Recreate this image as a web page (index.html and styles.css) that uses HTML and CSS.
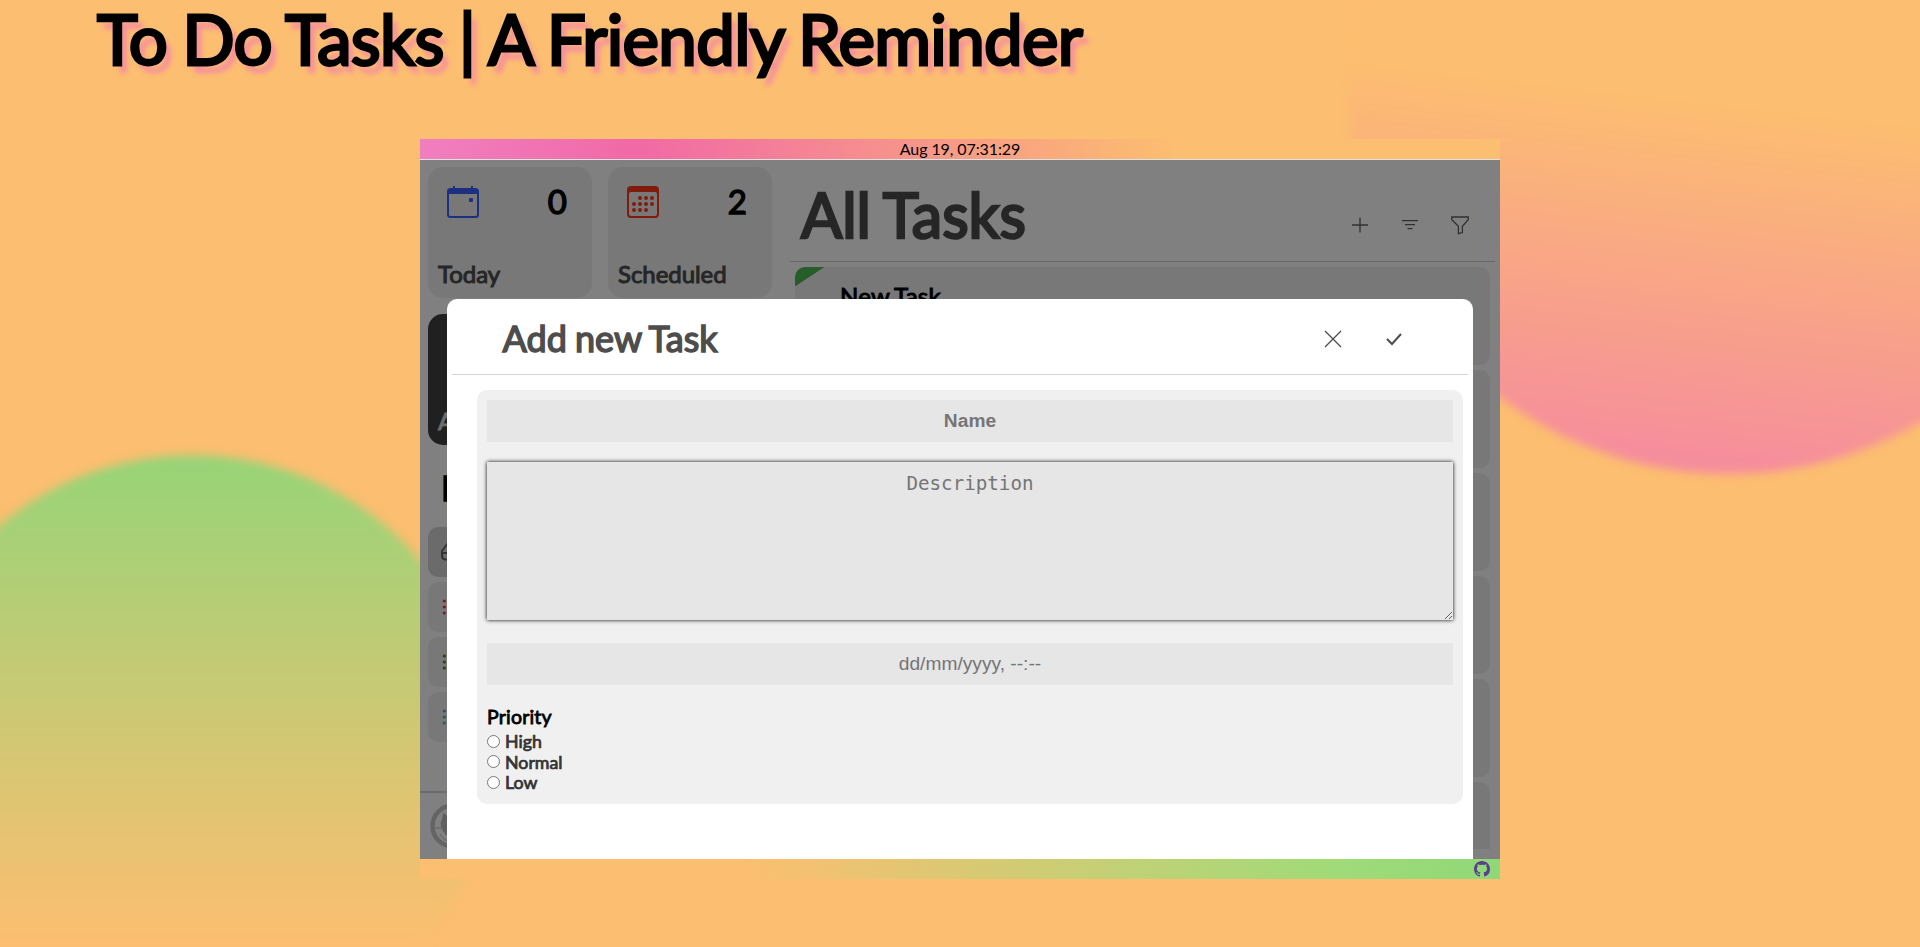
FILE: index.html
```html
<!DOCTYPE html>
<html lang="en">
<head>
<meta charset="utf-8">
<title>To Do Tasks</title>
<link rel="stylesheet" href="styles.css">
</head>
<body>
<div class="backdrop">
  <div class="blob blob-pink"></div>
  <div class="blob blob-green"></div>
</div>
<h1 class="title">To Do Tasks | A Friendly Reminder</h1>
<div class="window">
  <header class="topbar">Aug 19, 07:31:29</header>
  <div class="app">
    <aside class="side">
      <div class="tiles">
        <div class="tile">
          <div class="tile-top">
            <svg class="tile-icon blue" viewBox="0 0 32 32"><path fill="currentColor" fill-rule="evenodd" d="M6 0h2v2h16V0h2v2h2.500a3.500 3.500 0 0 1 3.500 3.500v23a3.500 3.500 0 0 1-3.500 3.500h-25A3.500 3.500 0 0 1 0 28.500v-23A3.500 3.500 0 0 1 3.500 2H6zM2 8v20.500Q2 30 3.500 30h25q1.500 0 1.500-1.500V8zM22 13q0-1 1-1h2q1 0 1 1v2q0 1-1 1h-2q-1 0-1-1z"/></svg>
            <span class="count">0</span>
          </div>
          <span class="tile-name">Today</span>
        </div>
        <div class="tile">
          <div class="tile-top">
            <svg class="tile-icon red" viewBox="0 0 32 32"><path fill="currentColor" fill-rule="evenodd" d="M4 0h24a4 4 0 0 1 4 4v24a4 4 0 0 1-4 4H4a4 4 0 0 1-4-4V4a4 4 0 0 1 4-4zM4 6Q2 6 2 8v20q0 2 2 2h24q2 0 2-2V8q0-2-2-2z"/><g fill="currentColor"><circle cx="13" cy="12" r="2"/><circle cx="19" cy="12" r="2"/><circle cx="25" cy="12" r="2"/><circle cx="7" cy="18" r="2"/><circle cx="13" cy="18" r="2"/><circle cx="19" cy="18" r="2"/><circle cx="25" cy="18" r="2"/><circle cx="7" cy="24" r="2"/><circle cx="13" cy="24" r="2"/><circle cx="19" cy="24" r="2"/></g></svg>
            <span class="count">2</span>
          </div>
          <span class="tile-name">Scheduled</span>
        </div>
        <div class="tile tile-dark"><span class="tile-name">All</span></div>
      </div>
      <h2 class="lists-title">Lists</h2>
      <div class="lists">
        <div class="list active"><svg class="list-icon" viewBox="0 0 30 30"><path fill="none" stroke="currentColor" stroke-width="2" d="M12 6 6 14v4.500q0 4 4 4h12v-6.500H6"/></svg></div>
        <div class="list red"><svg class="list-icon" viewBox="0 0 30 30"><g fill="currentColor"><circle cx="8.300" cy="9" r="1.600"/><circle cx="8.300" cy="15" r="1.600"/><circle cx="8.300" cy="21" r="1.600"/></g></svg></div>
        <div class="list green"><svg class="list-icon" viewBox="0 0 30 30"><g fill="currentColor"><circle cx="8.300" cy="9" r="1.600"/><circle cx="8.300" cy="15" r="1.600"/><circle cx="8.300" cy="21" r="1.600"/></g></svg></div>
        <div class="list teal"><svg class="list-icon" viewBox="0 0 30 30"><g fill="currentColor"><circle cx="8.300" cy="9" r="1.600"/><circle cx="8.300" cy="15" r="1.600"/><circle cx="8.300" cy="21" r="1.600"/></g></svg></div>
      </div>
      <div class="profile">
        <svg class="avatar" viewBox="0 0 46 46"><circle cx="23" cy="23" r="20.500" fill="none" stroke="#646464" stroke-width="4.500"/><path fill="#5f5f5f" d="M13 10q3 1 5 4h10v18H16q-8-9-4-16z"/><path fill="none" stroke="#6b6b6b" stroke-width="1.500" d="M4 25h9M10 31q3 6 9 7"/></svg>
      </div>
    </aside>
    <main class="main">
      <div class="main-head">
        <h2 class="main-title">All Tasks</h2>
        <div class="tools">
          <svg class="tool" viewBox="0 0 24 24"><path d="M12 4.500v15M4 12h16"/></svg>
          <svg class="tool" viewBox="0 0 24 24"><path d="M4 7.700h16M7 11.700h10M9.500 15.700h5"/></svg>
          <svg class="tool" viewBox="0 0 24 24"><path d="M3.800 4h16.400v2.700l-5.800 6.500v6.400l-4 1v-7.400L3.800 6.700z"/></svg>
        </div>
      </div>
      <div class="tasks">
        <div class="task done"><span class="task-name">New Task</span></div>
        <div class="task"></div>
        <div class="task"></div>
        <div class="task"></div>
        <div class="task"></div>
        <div class="task"></div>
      </div>
    </main>
    <section class="modal">
      <div class="modal-head">
        <h3 class="modal-title">Add new Task</h3>
        <div class="modal-tools">
          <svg class="mtool" viewBox="0 0 24 24"><path d="m4 4 16 16M20 4 4 20"/></svg>
          <svg class="mtool" viewBox="0 0 24 24"><path stroke-width="2" d="m5 12 5 5 9-10"/></svg>
        </div>
      </div>
      <form class="form">
        <input class="field name" type="text" placeholder="Name">
        <textarea class="desc" placeholder="Description"></textarea>
        <input class="field date" type="text" placeholder="dd/mm/yyyy, --:--">
        <div class="legend">Priority</div>
        <label class="opt"><input class="radio" type="radio" name="priority">High</label>
        <label class="opt"><input class="radio" type="radio" name="priority">Normal</label>
        <label class="opt"><input class="radio" type="radio" name="priority">Low</label>
      </form>
    </section>
  </div>
  <footer class="bottombar">
    <svg class="github" viewBox="0 0 16 16"><path fill="currentColor" d="M8 0C3.580 0 0 3.580 0 8c0 3.540 2.290 6.530 5.470 7.590.4.070.55-.17.55-.38 0-.19-.01-.82-.01-1.490-2.010.37-2.530-.49-2.690-.94-.09-.23-.48-.94-.82-1.130-.28-.15-.68-.52-.01-.53.63-.01 1.080.58 1.230.82.72 1.210 1.870.87 2.330.66.070-.52.28-.87.51-1.070-1.780-.2-3.640-.89-3.640-3.950 0-.87.31-1.590.82-2.150-.08-.2-.36-1.020.08-2.120 0 0 .67-.21 2.200.82.64-.18 1.320-.27 2-.27s1.360.09 2 .27c1.530-1.040 2.200-.82 2.200-.82.44 1.100.16 1.920.08 2.120.51.56.82 1.270.82 2.150 0 3.070-1.870 3.750-3.650 3.950.29.25.54.73.54 1.480 0 1.070-.01 1.930-.01 2.200 0 .21.15.46.55.38A8.010 8.010 0 0 0 16 8c0-4.420-3.580-8-8-8z"/></svg>
  </footer>
</div>
</body>
</html>
```
FILE: styles.css
```css
* { box-sizing: border-box; margin: 0; }
body {
  position: relative;
  height: 947px;
  overflow: hidden;
  background: #fcbe70;
  font-family: Lato, "Liberation Sans", sans-serif;
  color: #000;
}
.title, .main-title, .modal-title, .tile-name, .count, .lists-title, .task-name, .legend, .opt {
  font-weight: 400;
  -webkit-text-stroke: 0.042em currentColor;
}

.backdrop { position: absolute; inset: 0; overflow: hidden; }
.blob { position: absolute; border-radius: 50%; filter: blur(5px); }
.blob-pink {
  left: 1349px; top: -286px; width: 760px; height: 760px;
  background: linear-gradient(186.500deg, #fcbe70 51%, #f58c9d 95%);
}
.blob-green {
  left: -108px; top: 455px; width: 600px; height: 600px;
  background: linear-gradient(180deg, #9ad377 3%, #fcbe70 81%);
}

.title {
  position: relative;
  height: 139px;
  padding-left: 97px;
  font-size: 69px;
  line-height: 83px;
  margin-top: -3px;
  height: 142px;
  letter-spacing: -0.650px;
  word-spacing: -2px;
  text-shadow: 6px 8px 5px #f58d9f;
}
.window { position: relative; width: 1080px; margin: 0 auto; }
.topbar {
  height: 20px;
  text-align: center;
  font-size: 16px;
  letter-spacing: -0.100px;
  line-height: 20px;
  background: linear-gradient(90deg, #f07fc0 0%, #f169a6 20%, #fcbe70 70%);
}
.app {
  position: relative;
  display: flex;
  height: 700px;
  overflow: hidden;
  border-top: 1px solid #e0e0e0;
  background: #808080;
}
.side { display: flex; flex-direction: column; width: 370px; }
.tiles {
  display: grid;
  grid-template-columns: 164px 164px;
  grid-auto-rows: 131px;
  gap: 16px;
  padding: 7px 8px 0;
}
.tile {
  display: flex;
  flex-direction: column;
  justify-content: space-between;
  padding: 19px 25px 8px 10px;
  border-radius: 15px;
  background: #787878;
}
.tile-dark { justify-content: flex-end; background: #202020; }
.tile-top { display: flex; justify-content: space-between; padding-left: 9px; }
.tile-icon { width: 32px; height: 32px; }
.tile-icon.blue { color: #1c2f80; }
.tile-icon.red { color: #801c0c; }
.count { font-size: 33px; line-height: 30px; }
.tile-name { font-size: 24px; line-height: 32px; letter-spacing: -0.050px; color: #262626; }
.tile-dark .tile-name { color: #6c6c6c; }
.lists-title { padding: 20px 0 4px 21px; font-size: 34px; line-height: 45px; height: 69px; }
.lists { display: flex; flex-direction: column; gap: 5px; padding: 13px 8px 0; }
.list { display: flex; align-items: center; height: 50px; padding-left: 8px; border-radius: 10px; background: #787878; }
.list.active { background: #6b6b6b; color: #333; }
.list.red { color: #801c10; }
.list.green { color: #20480c; }
.list.teal { color: #285868; }
.list-icon { width: 30px; height: 30px; }
.profile { margin-top: auto; height: 68px; padding: 10px; border-top: 2px solid #6c6c6c; }
.avatar { display: block; width: 46px; height: 46px; }

.main { width: 710px; padding: 0 5px 0 0; }
.main-head {
  display: flex;
  justify-content: space-between;
  height: 102px;
  padding: 14px 23px 0 11px;
  border-bottom: 1px solid #686868;
}
.main-title { font-size: 61px; line-height: 81px; letter-spacing: 0; word-spacing: -2px; color: #262626; }
.tools { display: flex; gap: 26px; padding-top: 38.500px; }
.tool { width: 24px; height: 24px; fill: none; stroke: #303030; stroke-width: 1.300; }
.tasks { display: flex; flex-direction: column; gap: 5px; height: 587px; overflow: hidden; padding: 5px 5px 0; }
.task { flex: none; height: 98px; padding: 12px 45px; border-radius: 10px; background: #787878; }
.task.done { background: linear-gradient(146.500deg, #265e2b 0 16px, #787878 16.500px); }
.task-name { font-size: 24px; line-height: 33px; letter-spacing: 0.200px; word-spacing: -1px; }

.modal {
  position: absolute;
  left: 27px;
  top: 139px;
  width: 1026px;
  height: 560px;
  padding: 0 5px;
  border-radius: 10px 10px 0 0;
  background: #fff;
}
.modal-head {
  display: flex;
  justify-content: space-between;
  height: 76px;
  padding: 19px 62px 0 50.500px;
  border-bottom: 1px solid #d6d6d6;
}
.modal-title { font-size: 36px; line-height: 41px; letter-spacing: 0; word-spacing: -1px; color: #4d4d4d; }
.modal-tools { display: flex; gap: 37px; padding-top: 8.500px; }
.mtool { width: 24px; height: 24px; fill: none; stroke: #4d4d4d; stroke-width: 1.300; }
.form {
  display: flex;
  flex-direction: column;
  width: 986px;
  height: 414px;
  margin: 15px 0 0 25px;
  padding: 10px;
  border-radius: 10px;
  background: #f0f0f0;
}
.field {
  flex: none;
  width: 966px;
  height: 42px;
  border: 0;
  background: #e6e6e6;
  text-align: center;
  font-family: "Liberation Sans", sans-serif;
  font-size: 19.200px;
}
.name { font-weight: 700; }
.desc {
  flex: none;
  width: 966px;
  height: 158px;
  margin: 20px 0 23px;
  padding: 10px;
  border: 0;
  background: #e6e6e6;
  box-shadow: 0 0 4px #000;
  text-align: center;
  font-family: "DejaVu Sans Mono", monospace;
  font-size: 19.200px;
}
.field::placeholder, .desc::placeholder { color: #757575; }
.legend { margin-top: 19px; font-size: 19.500px; line-height: 26px; letter-spacing: 0.200px; }
.opt { display: flex; align-items: center; height: 20.500px; font-size: 17.800px; letter-spacing: 0; color: #333; }
.legend + .opt { margin-top: 1px; }
.radio { width: 13px; height: 13px; margin: 0 5px 0 0; }
.bottombar {
  display: flex;
  justify-content: flex-end;
  align-items: center;
  height: 20px;
  padding-right: 10px;
  background: linear-gradient(90deg, #fcbe70 30%, #a0db78 85%, #8fd877 100%);
}
.github { width: 16px; height: 16px; color: #5c3d8e; }
```
